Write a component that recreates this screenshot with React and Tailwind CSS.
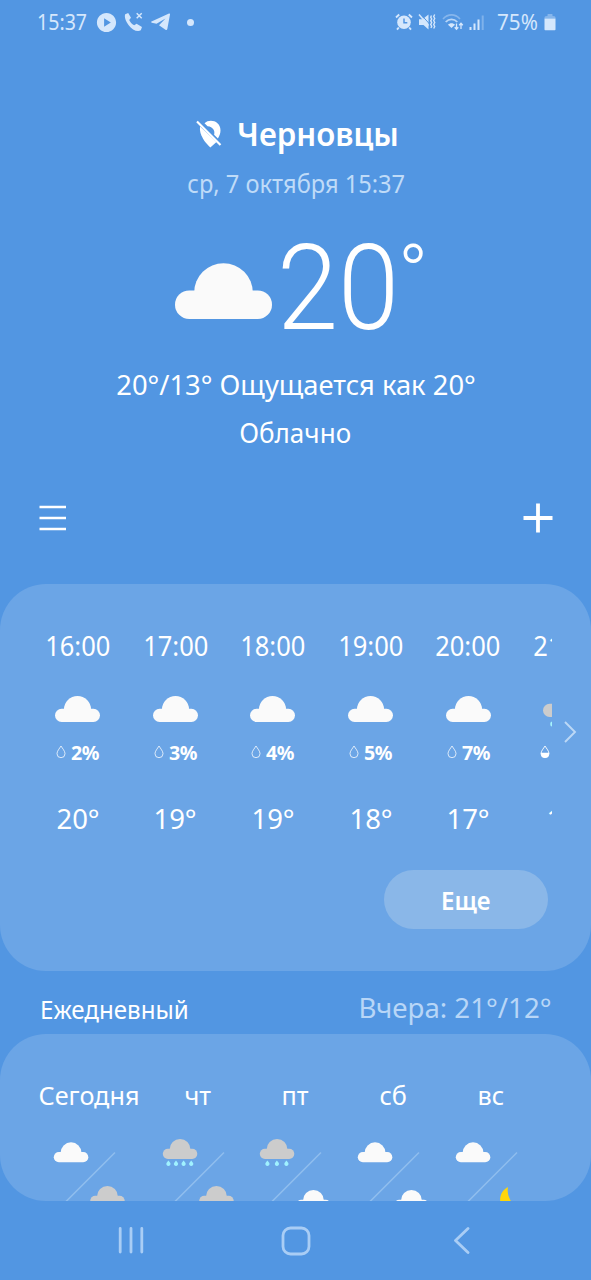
import { MdPlayCircle } from "react-icons/md";

const WHITE = "#fafafa";
const GRAY = "#cccccc";

function Cloud({ fill = WHITE, className }) {
  return (
    <svg viewBox="0 0 97 56" className={className} fill={fill}>
      <rect x="0" y="27.4" width="97" height="28.6" rx="14.3" />
      <path d="M19.2 29.5a29.3 29.3 0 0 1 58.6 0v10H19.2z" />
    </svg>
  );
}

function CloudShape({ x, y, fill }) {
  return (
    <g transform={`translate(${x} ${y}) scale(0.3557)`} fill={fill}>
      <rect x="0" y="27.4" width="97" height="28.6" rx="14.3" />
      <path d="M19.2 29.5a29.3 29.3 0 0 1 58.6 0v10H19.2z" />
    </g>
  );
}

function Drop({ half }) {
  return (
    <svg viewBox="0 0 10 14" className="h-[14px] w-[10px] shrink-0 -translate-y-px" fill="none" stroke="#fff" strokeWidth="0.9">
      <path d="M5 1C6.5 3.6 9 6 9 8.7a4 4 0 0 1-8 0C1 6 3.5 3.6 5 1z" strokeOpacity={half ? 1 : 0.85} />
      {half && <path d="M1 7.8h8v1a4 4 0 0 1-8 0z" fill="#fff" stroke="none" />}
    </svg>
  );
}

function StatusBar() {
  return (
    <div className="flex h-11 items-center justify-between pl-[37px] pr-[35px] text-[#d5e7fc]">
      <div className="flex items-center">
        <div className="mt-px w-[51px] whitespace-nowrap">
          <span className="inline-block origin-left scale-x-[0.89] text-[22px] leading-none">15:37</span>
        </div>
        <MdPlayCircle className="ml-[7px] h-[23px] w-[23px]" />
        <svg viewBox="0 0 20 20" className="ml-[6px] h-5 w-5" fill="currentColor">
          <path d="M1.2 2.3 4.2 1 7 5.7 5.2 8.1c1 2.2 2.5 3.9 5 5.2l2.4-1.5 5.4 3.2-1.2 3.3C13.500 20.500 8 17.800 4.500 13 1.300 8.500.2 4.800 1.200 2.300z" />
          <path d="m12.700 1.200 5 5m0-5-5 5" fill="none" stroke="currentColor" strokeWidth="1.500" />
        </svg>
        <svg viewBox="0 0 20 18" className="ml-[7px] h-[18px] w-5" fill="currentColor">
          <path d="M.5 8.500 18 .6q1.200-.3 1 .9L16.300 16q-.4 1.600-1.800.7L8 12.300 14.500 5.500 5.500 10.800.8 9.700Q-.5 9.100.5 8.500z" />
        </svg>
        <span className="ml-4 h-[7px] w-[7px] rounded-full bg-current" />
      </div>
      <div className="flex items-center">
        <svg viewBox="0 0 18 18" className="h-[18px] w-[18px]" fill="none" stroke="currentColor">
          <circle cx="9" cy="9.300" r="6.800" fill="currentColor" stroke="none" />
          <path d="M1 4.500 4.200 1.500M17 4.500l-3.200-3M3.800 14.500 2 16.700M14.200 14.500l1.800 2.200" strokeWidth="1.900" />
          <path d="M9 5.500v4.300h3.300" stroke="#5296e2" strokeWidth="1.500" />
        </svg>
        <svg viewBox="0 0 18 18" className="ml-[5px] h-[18px] w-[18px]" fill="none" stroke="currentColor">
          <path d="M1 6.300h3.500L10.500 1.500v15L5.500 12H1z" fill="currentColor" stroke="none" />
          <path d="M2.500 1 12.500 12" stroke="#5296e2" strokeWidth="1" />
          <path d="M1 1.500 10.500 12.500" strokeWidth="1.500" />
          <path d="M13.500 2.500l-.8 1.700 1 1.800-1 1.800 1 1.800-1 1.800 1 1.800-.8 1.700M16.700 1.500l-1 2 1 2-1 2 1 2-1 2 1 2-1 2" strokeWidth="1.400" />
        </svg>
        <svg viewBox="0 0 22 18" className="ml-[6px] h-[18px] w-[22px]" fill="none" stroke="currentColor">
          <path d="M1 6C6 .6 13 .6 18 6" strokeWidth="1.700" opacity=".4" />
          <path d="M3.700 9c3.300-3.500 8.300-3.500 11.600 0" strokeWidth="1.800" opacity=".8" />
          <path d="M6 11.700c2-2 5-2 7 0L9.500 15z" fill="currentColor" stroke="none" />
          <path d="M14.500 10.500v5.500M12.700 14.300l1.800 2 1.800-2M19 16v-5.500M17.200 12.200l1.800-2 1.800 2" strokeWidth="1.300" />
        </svg>
        <svg viewBox="0 0 16 18" className="ml-[5px] h-[18px] w-4" fill="currentColor">
          <path d="M.5 14h2v3h-2zM4.500 10.500h2V17h-2zM8.500 6.500h2V17h-2z" />
          <path d="M12.700 2.500h2V17h-2z" opacity=".35" />
        </svg>
        <div className="ml-[12px] mt-px w-[43px] whitespace-nowrap">
          <span className="inline-block origin-left scale-x-[0.94] text-[22px] leading-none">75%</span>
        </div>
        <svg viewBox="0 0 12 18" className="ml-[4px] h-[18px] w-3" fill="currentColor">
          <path d="M.5 5.500V4.500Q.5 3.500 1.500 3.300L3.500 3V1.500Q3.500 1 4 1h4q.5 0 .5.500V3l2 .3q1 .2 1 1.200v1z" opacity=".4" />
          <path d="M.5 5.500h11v11q0 .8-.8.8H1.300q-.8 0-.8-.8z" />
        </svg>
      </div>
    </div>
  );
}

function LocationOff() {
  return (
    <svg viewBox="0 0 28 30" className="h-[30px] w-7 -translate-y-px" fill="#fff">
      <path d="M2 3.500 25.500 27" stroke="#fff" strokeWidth="2.200" />
      <path d="M5 8.500 21.500 24 15.300 29.500C10 24.500 4 17 5 8.500z" />
      <path d="M9.500 5.200C14.500.3 25.500 2.800 25.500 12.300c0 3.200-1 5.700-2.600 8.200l-3.800-3.800C20.300 13 18 8.800 12.600 8.300z" />
    </svg>
  );
}

function Summary() {
  return (
    <section className="mt-[65px] flex flex-col text-white">
      <div className="flex h-[50px] items-center pl-[195px]">
        <LocationOff />
        <h1 className="ml-[14px] origin-left scale-x-[0.975] whitespace-nowrap text-[32px] font-semibold leading-none">Черновцы</h1>
      </div>
      <div className="flex h-[50px] items-center justify-center text-[#bfdbf8]">
        <span className="scale-x-[0.945] whitespace-nowrap pl-px text-[25px]">ср, 7 октября 15:37</span>
      </div>
      <div className="flex h-[151px] items-start pl-[175px]">
        <Cloud className="mt-[54px] h-[56px] w-[97px]" />
        <div className="ml-[5px] mt-[21px] w-[122px] whitespace-nowrap font-['Roboto',sans-serif] text-[119px] font-light leading-[118px]">
          <span className="inline-block origin-left scale-x-[0.925]">20</span>
        </div>
        <span className="-ml-px mt-[25px] font-['Roboto',sans-serif] text-[80px] font-light leading-[80px]">°</span>
      </div>
      <div className="flex h-12 items-center justify-center">
        <span className="scale-x-[0.977] whitespace-nowrap text-[28px]">20°/13° Ощущается как 20°</span>
      </div>
      <div className="flex h-12 items-center justify-center">
        <span className="scale-x-[0.93] whitespace-nowrap text-[28px]">Облачно</span>
      </div>
    </section>
  );
}

function Toolbar() {
  return (
    <div className="mb-1 flex h-[124px] items-center justify-between pl-[39px] pr-[38px]">
      <svg viewBox="0 0 28 26" className="h-[26px] w-7" stroke="#fff" strokeWidth="2.6">
        <path d="M.5 2h26.500M.5 13h26.500M.5 24h26.500" />
      </svg>
      <svg viewBox="0 0 30 30" className="h-[30px] w-[30px]" stroke="#fff" strokeWidth="3.8">
        <path d="M.5 15h29M15 .5v29" />
      </svg>
    </div>
  );
}

const hours = [
  { time: "16:00", chance: "2%", temp: "20°" },
  { time: "17:00", chance: "3%", temp: "19°" },
  { time: "18:00", chance: "4%", temp: "19°" },
  { time: "19:00", chance: "5%", temp: "18°" },
  { time: "20:00", chance: "7%", temp: "17°" },
  { time: "21:00", chance: "51%", temp: "17°", rain: true },
];

function Hour({ time, chance, temp, rain }) {
  return (
    <div className="flex w-[97.6px] shrink-0 flex-col items-center whitespace-nowrap">
      <div className="flex h-[50px] items-center">
        <span className="scale-x-[0.91] text-[28px]">{time}</span>
      </div>
      <div className="flex h-[70px] w-full justify-center">
        {rain ? (
          <svg viewBox="0 0 45 40" className="mt-[21px] h-10 w-[45px]">
            <g transform="scale(0.464)" fill={GRAY}>
              <rect y="27.4" width="97" height="28.6" rx="14.3" />
              <path d="M19.2 29.5a29.3 29.3 0 0 1 58.6 0v10H19.2z" />
            </g>
            <g fill="#a5f3fc">
              <ellipse cx="9" cy="33" rx="1.800" ry="2.500" />
              <ellipse cx="19" cy="33" rx="1.800" ry="2.500" />
            </g>
          </svg>
        ) : (
          <Cloud className="mt-[26px] h-[26px] w-[45px]" />
        )}
      </div>
      <div className="mt-px flex h-6 items-center gap-[5px]">
        <Drop half={rain} />
        <div className={rain ? "w-[36px]" : "w-[28px]"}>
          <span className="inline-block origin-left scale-x-[0.98] text-[20px] font-bold leading-6 tracking-[-0.5px]">{chance}</span>
        </div>
      </div>
      <div className={rain ? "mt-[28px] flex h-[50px] items-center pl-1" : "mt-[28px] flex h-[50px] items-center"}>
        <span className="scale-x-[0.98] text-[28px]">{temp}</span>
      </div>
    </div>
  );
}

function HourlyCard() {
  return (
    <section className="flex h-[387px] flex-col rounded-[46px] bg-[#6ba5e6] pt-[36px] text-white">
      <div className="flex">
        <div className="ml-[29px] flex w-[523px] shrink-0 overflow-hidden">
          {hours.map((h) => (
            <Hour key={h.time} {...h} />
          ))}
        </div>
        <svg viewBox="0 0 14 22" className="ml-[12px] mt-[101px] h-[22px] w-[14px] shrink-0" fill="none" stroke="#bcd8f6" strokeWidth="1.9">
          <path d="m1 1 10 10L1 21" />
        </svg>
      </div>
      <button className="ml-[384px] mt-[27px] flex h-[59px] w-[164px] items-center justify-center rounded-full bg-[#8ab7e8]">
        <span className="scale-x-[0.96] pt-px text-[25px] font-semibold leading-none">Еще</span>
      </button>
    </section>
  );
}

const days = [
  { name: "Сегодня", day: "cloud", night: "gray" },
  { name: "чт", day: "rain", drops: [20, 27.6, 35.2, 42.8], night: "gray" },
  { name: "пт", day: "rain", drops: [22, 31.5, 41], night: "cloud" },
  { name: "сб", day: "cloud", night: "cloud" },
  { name: "вс", day: "cloud", night: "moon" },
];

function DayIcon({ day, drops = [], night }) {
  return (
    <svg viewBox="0 0 98 76" className="h-[76px] w-[98px] shrink-0">
      <path d="M75 16.5 25 66.5" stroke="#8fbdee" strokeWidth="1.5" />
      {day === "rain" ? (
        <CloudShape x={13.8} y={3} fill={GRAY} />
      ) : (
        <CloudShape x={13.8} y={6.3} fill={WHITE} />
      )}
      {drops.map((x) => (
        <path key={x} d={`M${x - 0.6} 24.500l1.900 2.500a2.100 2.100 0 1 1-3.800 0z`} fill="#a0f2ff" />
      ))}
      {night === "gray" && <CloudShape x={50.2} y={50} fill={GRAY} />}
      {night === "cloud" && <CloudShape x={50.2} y={54} fill={WHITE} />}
      {night === "moon" && (
        <path d="M66 51c-5 2.500-8.500 8-7.800 14.500h11C66.500 61 65 56 66 51z" fill="#ffd60a" />
      )}
    </svg>
  );
}

function Daily() {
  return (
    <>
      <div className="flex h-[63px] items-center justify-between pl-[40px] pr-[39px]">
        <span className="mt-[14px] origin-left scale-x-[0.965] text-[25px] text-white">Ежедневный</span>
        <span className="mt-[8px] origin-right scale-x-[0.987] text-[28px] text-[#b8d6f7]">Вчера: 21°/12°</span>
      </div>
      <section className="flex h-[167px] items-start overflow-hidden rounded-[46px] bg-[#6ba5e6] pl-[40px] pt-[36px] text-white">
        {days.map((d, i) => (
          <div key={d.name} className={i === 0 ? "mr-[11px] flex w-[98px] shrink-0 flex-col items-center" : "flex w-[97.6px] shrink-0 flex-col items-center"}>
            <div className="flex h-[50px] items-center">
              <span className="scale-x-[0.97] whitespace-nowrap text-[26px]">{d.name}</span>
            </div>
            <div className="mt-4">
              <DayIcon {...d} />
            </div>
          </div>
        ))}
      </section>
    </>
  );
}

function NavBar() {
  return (
    <nav className="flex h-[79px] items-center text-[#a9cdf5]">
      <svg viewBox="0 0 26 28" className="ml-[118px] h-7 w-[26px]" stroke="currentColor" strokeWidth="2.8" strokeLinecap="round">
        <path d="M2.2 1.500v23.500M13 1.500v23.500M23.800 1.500v23.500" />
      </svg>
      <svg viewBox="0 0 30 30" className="ml-[137px] h-[30px] w-[30px]" fill="none" stroke="currentColor" strokeWidth="2.8">
        <rect x="2" y="2" width="26" height="26" rx="7.5" />
      </svg>
      <svg viewBox="0 0 18 28" className="ml-[142px] h-7 w-[18px]" fill="none" stroke="currentColor" strokeWidth="2.8" strokeLinecap="round" strokeLinejoin="round">
        <path d="M15 1.500 2.500 13.500 15 25.500" />
      </svg>
    </nav>
  );
}

export default function App() {
  return (
    <main className="flex h-[1280px] w-[591px] flex-col overflow-hidden bg-[#5296e2] font-['Noto_Sans',sans-serif]">
      <StatusBar />
      <Summary />
      <Toolbar />
      <HourlyCard />
      <Daily />
      <NavBar />
    </main>
  );
}
